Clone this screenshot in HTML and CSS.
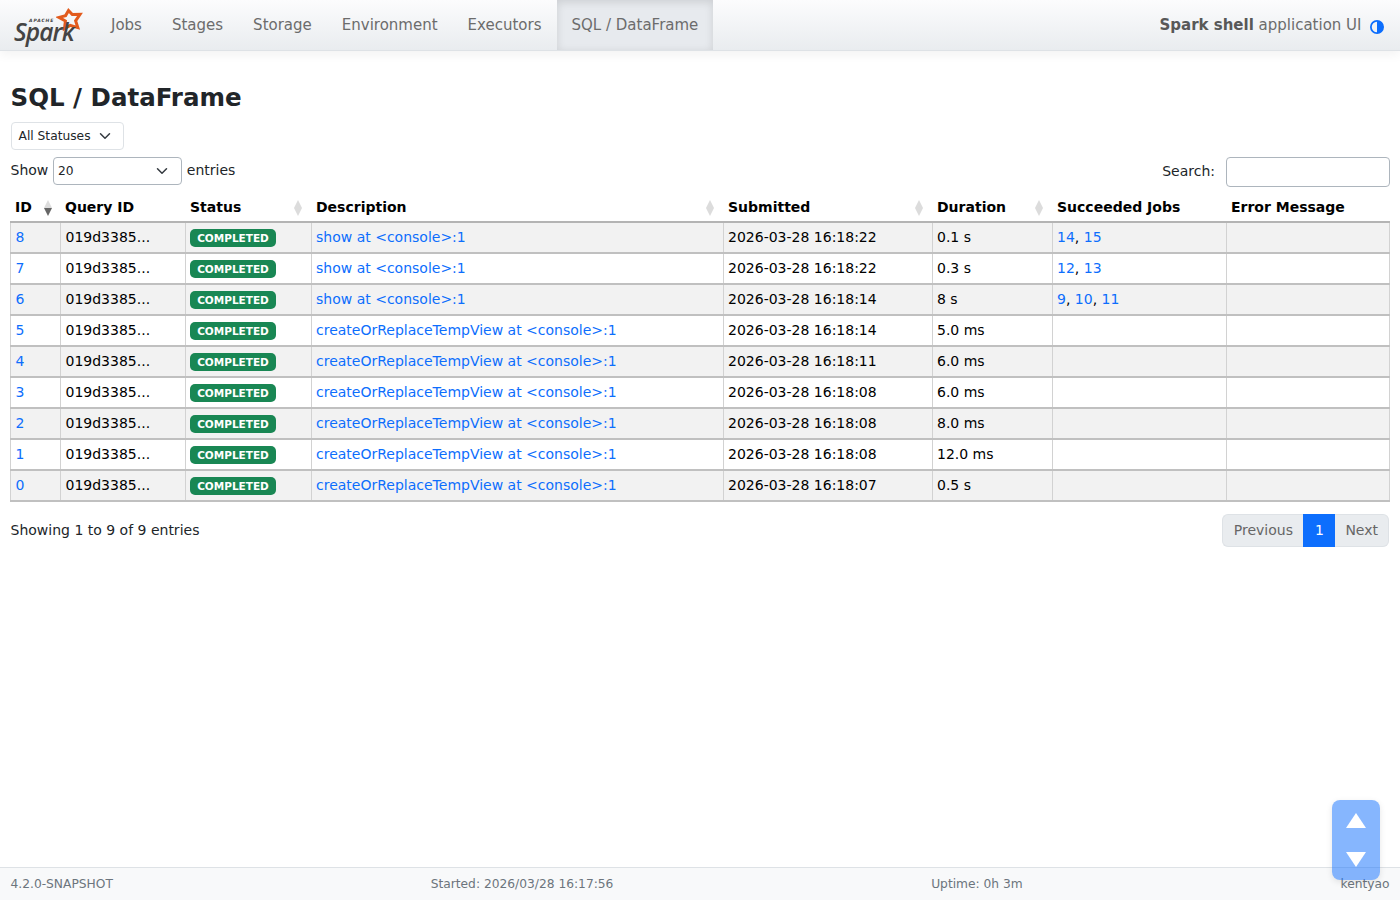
FILE: index.html
```html
<!DOCTYPE html>
<html lang="en">
<head>
<meta charset="utf-8">
<title>Spark shell - SQL / DataFrame</title>
<link rel="stylesheet" href="styles.css">
</head>
<body>
<nav class="navbar">
  <a class="brand" href="#">
    <span class="brand-apache">APACHE</span>
    <span class="brand-spark">Spark</span>
    <svg class="brand-star" viewBox="0 0 30 30" width="30" height="30" aria-hidden="true"><path d="M12.5 4.5 L16.3 8.6 L24 8.4 L19.6 14.8 L21.8 21.6 L14.2 19.4 L8.5 22.5 L9.4 15 L3 11.4 L9.6 9.6 Z" fill="none" stroke="#e25a1c" stroke-width="3" stroke-linejoin="miter"/></svg>
  </a>
  <ul class="nav-links">
    <li><a href="#">Jobs</a></li>
    <li><a href="#">Stages</a></li>
    <li><a href="#">Storage</a></li>
    <li><a href="#">Environment</a></li>
    <li><a href="#">Executors</a></li>
    <li class="active"><a href="#">SQL / DataFrame</a></li>
  </ul>
  <div class="nav-right">
    <span class="app-name"><strong>Spark shell</strong> application UI</span>
    <svg class="theme-icon" viewBox="0 0 16 16" width="14" height="14" aria-hidden="true"><circle cx="8" cy="8" r="7" fill="none" stroke="#0d6efd" stroke-width="2"/><path d="M8 1a7 7 0 0 1 0 14z" fill="#0d6efd"/></svg>
  </div>
</nav>

<main class="content">
  <h3 class="title">SQL / DataFrame</h3>
  <button class="status-filter">All Statuses
    <svg viewBox="0 0 16 16" width="12" height="12" aria-hidden="true"><path d="M2 5l6 6 6-6" fill="none" stroke="#343a40" stroke-width="2" stroke-linecap="round" stroke-linejoin="round"/></svg>
  </button>
  <div class="table-top">
    <div class="length">Show
      <span class="select">20
        <svg viewBox="0 0 16 16" width="12" height="12" aria-hidden="true"><path d="M2 5l6 6 6-6" fill="none" stroke="#343a40" stroke-width="2" stroke-linecap="round" stroke-linejoin="round"/></svg>
      </span>
      entries</div>
    <div class="search">Search: <span class="search-input"></span></div>
  </div>
  <table class="data">
    <colgroup>
      <col class="c-id"><col class="c-query"><col class="c-status"><col class="c-desc"><col class="c-sub"><col class="c-dur"><col class="c-jobs"><col class="c-err">
    </colgroup>
    <thead>
      <tr>
        <th class="sort sorted">ID<span class="arrows"><i class="up"></i><i class="down"></i></span></th>
        <th class="shift">Query ID</th>
        <th class="sort">Status<span class="arrows"><i class="up"></i><i class="down"></i></span></th>
        <th class="sort">Description<span class="arrows"><i class="up"></i><i class="down"></i></span></th>
        <th class="sort">Submitted<span class="arrows"><i class="up"></i><i class="down"></i></span></th>
        <th class="sort">Duration<span class="arrows"><i class="up"></i><i class="down"></i></span></th>
        <th>Succeeded Jobs</th>
        <th>Error Message</th>
      </tr>
    </thead>
    <tbody>
      <tr><td class="shift"><a href="#">8</a></td><td class="shift">019d3385...</td><td><span class="badge">COMPLETED</span></td><td><a href="#">show at &lt;console&gt;:1</a></td><td>2026-03-28 16:18:22</td><td>0.1 s</td><td><a href="#">14</a>, <a href="#">15</a></td><td></td></tr>
      <tr><td class="shift"><a href="#">7</a></td><td class="shift">019d3385...</td><td><span class="badge">COMPLETED</span></td><td><a href="#">show at &lt;console&gt;:1</a></td><td>2026-03-28 16:18:22</td><td>0.3 s</td><td><a href="#">12</a>, <a href="#">13</a></td><td></td></tr>
      <tr><td class="shift"><a href="#">6</a></td><td class="shift">019d3385...</td><td><span class="badge">COMPLETED</span></td><td><a href="#">show at &lt;console&gt;:1</a></td><td>2026-03-28 16:18:14</td><td>8 s</td><td><a href="#">9</a>, <a href="#">10</a>, <a href="#">11</a></td><td></td></tr>
      <tr><td class="shift"><a href="#">5</a></td><td class="shift">019d3385...</td><td><span class="badge">COMPLETED</span></td><td><a href="#">createOrReplaceTempView at &lt;console&gt;:1</a></td><td>2026-03-28 16:18:14</td><td>5.0 ms</td><td></td><td></td></tr>
      <tr><td class="shift"><a href="#">4</a></td><td class="shift">019d3385...</td><td><span class="badge">COMPLETED</span></td><td><a href="#">createOrReplaceTempView at &lt;console&gt;:1</a></td><td>2026-03-28 16:18:11</td><td>6.0 ms</td><td></td><td></td></tr>
      <tr><td class="shift"><a href="#">3</a></td><td class="shift">019d3385...</td><td><span class="badge">COMPLETED</span></td><td><a href="#">createOrReplaceTempView at &lt;console&gt;:1</a></td><td>2026-03-28 16:18:08</td><td>6.0 ms</td><td></td><td></td></tr>
      <tr><td class="shift"><a href="#">2</a></td><td class="shift">019d3385...</td><td><span class="badge">COMPLETED</span></td><td><a href="#">createOrReplaceTempView at &lt;console&gt;:1</a></td><td>2026-03-28 16:18:08</td><td>8.0 ms</td><td></td><td></td></tr>
      <tr><td class="shift"><a href="#">1</a></td><td class="shift">019d3385...</td><td><span class="badge">COMPLETED</span></td><td><a href="#">createOrReplaceTempView at &lt;console&gt;:1</a></td><td>2026-03-28 16:18:08</td><td>12.0 ms</td><td></td><td></td></tr>
      <tr><td class="shift"><a href="#">0</a></td><td class="shift">019d3385...</td><td><span class="badge">COMPLETED</span></td><td><a href="#">createOrReplaceTempView at &lt;console&gt;:1</a></td><td>2026-03-28 16:18:07</td><td>0.5 s</td><td></td><td></td></tr>
    </tbody>
  </table>
  <div class="table-bottom">
    <div class="info">Showing 1 to 9 of 9 entries</div>
    <div class="pager"><span class="page first">Previous</span><span class="page current">1</span><span class="page last">Next</span></div>
  </div>
</main>

<div class="scroll-widget" aria-hidden="true"><i class="scroll-up"></i><i class="scroll-down"></i></div>

<footer class="footer">
  <span>4.2.0-SNAPSHOT</span>
  <span>Started: 2026/03/28 16:17:56</span>
  <span>Uptime: 0h 3m</span>
  <span>kentyao</span>
</footer>
</body>
</html>
```

FILE: styles.css
```css
* { box-sizing: border-box; }
html, body { margin: 0; height: 100%; }
body {
  font-family: "DejaVu Sans", sans-serif;
  font-size: 14px;
  line-height: 21px;
  color: #212529;
  background: #fff;
  display: flex;
  flex-direction: column;
  height: 900px;
  overflow: hidden;
}
a { color: #0d6efd; text-decoration: none; }

.navbar {
  height: 51px;
  flex: none;
  display: flex;
  align-items: stretch;
  background: linear-gradient(#fcfcfd, #e9ecef);
  border-bottom: 1px solid #dee2e6;
  box-shadow: 0 4px 10px rgba(0,0,0,.05);
  padding: 0 16px 0 11px;
}
.brand { position: relative; width: 85px; flex: none; display: block; }
.brand-apache {
  position: absolute; left: 18px; top: 18px;
  font: italic bold 4.5px/5px "DejaVu Sans", sans-serif; letter-spacing: .9px; color: #444;
}
.brand-spark {
  position: absolute; left: 3px; top: 23px; z-index: 1;
  font: italic 600 24.5px/18px "Open Sans", sans-serif; letter-spacing: -.9px; color: #444;
}
.brand-star { position: absolute; left: 45px; top: 6px; }
.nav-links { display: flex; list-style: none; margin: 0; padding: 0; font-size: 15px; }
.nav-links li { display: flex; }
.nav-links a { color: #6c6c6c; padding: 0 15px; line-height: 50px; display: block; }
.nav-links .active { background: #e7eaee; box-shadow: inset 0 2px 8px rgba(0,0,0,.12); }
.nav-right { margin-left: auto; display: flex; align-items: center; gap: 8.5px; font-size: 15px; color: #6c6c6c; }
.app-name strong { color: #585858; }
.theme-icon { margin-top: 3px; }

.content { flex: 1; padding: 0 10px; }
.title { font-size: 24.5px; line-height: 29px; font-weight: 700; margin: 32px 0 10px .5px; }
.status-filter {
  display: flex; align-items: center; gap: 8px; margin-left: 1px;
  height: 28px; width: 113px; padding: 0 6.5px;
  background: #fff; border: 1px solid #dee2e6; border-radius: 4px;
  font: 12.25px/18px "DejaVu Sans", sans-serif; color: #212529;
}
.table-top { display: flex; justify-content: space-between; align-items: flex-start; margin-top: 7px; height: 35px; padding-left: .5px; }
.length { display: flex; align-items: flex-start; gap: 4.75px; height: 28px; line-height: 26px; color: #212529; }
.select {
  width: 129px; height: 28px; display: flex; align-items: center; justify-content: space-between;
  border: 1px solid #adb5bd; border-radius: 4px; padding: 0 13px 0 4px; font-size: 12.25px;
}
.search { display: flex; align-items: flex-start; gap: 11px; height: 30px; line-height: 28px; }
.search-input { width: 164px; height: 30px; border: 1px solid #adb5bd; border-radius: 4px; display: block; }

.data { width: 1379px; border-collapse: collapse; table-layout: fixed; color: #000; }
.c-id { width: 50px; } .c-query { width: 125px; } .c-status { width: 126px; } .c-desc { width: 412px; }
.c-sub { width: 209px; } .c-dur { width: 120px; } .c-jobs { width: 174px; } .c-err { width: 163px; }
.data th { position: relative; height: 30px; padding: 5px 4px 3px 4.5px; text-align: left; font-weight: 700; border-bottom: 2px solid #b4b4b4; }
.data td { padding: 4px; border: 1px solid #d2d2d2; border-top: 0; border-bottom: 2px solid #c0c0c0; white-space: nowrap; }
.data .shift { padding-left: 4.5px; }
.data tbody tr:nth-child(odd) td { background: #f2f2f2; }
.arrows { position: absolute; right: 10px; top: 8px; display: flex; flex-direction: column; gap: 0; }
.arrows i { display: block; width: 0; height: 0; border-left: 4.75px solid transparent; border-right: 4.75px solid transparent; }
.arrows .up { border-bottom: 8.5px solid #dcdcdc; }
.arrows .down { border-top: 8.5px solid #dcdcdc; }
.sorted .arrows { right: 8.5px; }
.sorted .arrows .down { border-top-color: #666; }
.badge {
  display: block; background: #198754; color: #fff; border-radius: 5px;
  font-size: 10.5px; font-weight: 700; line-height: 11px; padding: 3.5px 0; margin: 2px 0 1px; width: 86px; text-align: center; white-space: nowrap;
}

.table-bottom { display: flex; justify-content: space-between; align-items: flex-start; margin-top: 12px; padding: 0 1px 0 .5px; }
.info { padding-top: 6px; }
.pager { display: flex; height: 33px; line-height: 31px; }
.page { background: #e9ecef; color: #666; border: 1px solid #dee2e6; border-width: 1px 0; padding: 0 10.5px; }
.page.first { border-left-width: 1px; border-radius: 6px 0 0 6px; }
.page.last { border-right-width: 1px; border-radius: 0 6px 6px 0; padding: 0 10px; }
.page.current { background: #0d6efd; color: #fff; border-color: #0d6efd; padding: 0 11.5px; }

.scroll-widget {
  position: fixed; left: 1332px; top: 800px; width: 48px; height: 80px; z-index: 5;
  background: rgba(13,110,253,.5); border-radius: 8px; box-shadow: 0 2px 6px rgba(0,0,0,.1);
}
.scroll-widget i { position: absolute; left: 14px; width: 0; height: 0; border-left: 10px solid transparent; border-right: 10px solid transparent; }
.scroll-up { top: 12.5px; border-bottom: 15px solid #fff; }
.scroll-down { top: 52px; border-top: 15px solid #fff; }

.footer {
  flex: none; height: 33px; display: flex; justify-content: space-between; align-items: center;
  background: #f8f9fa; border-top: 1px solid #dee2e6; padding: 0 10.5px;
  font-size: 12.25px; color: #6c757d;
}
```
